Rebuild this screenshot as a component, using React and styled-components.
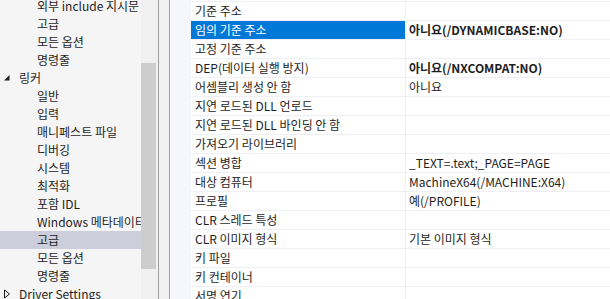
import styled, { createGlobalStyle } from 'styled-components';

const GlobalStyle = createGlobalStyle`
    html, body {
        margin: 0;
        padding: 0;
        overflow: hidden;
    }
    body {
        font-family: "Noto Sans CJK KR", "Noto Sans", sans-serif;
        font-size: 12px;
        color: #1e1e1e;
    }
`

const treeItems = [
    { label: "외부 include 지시문", level: 1 },
    { label: "고급", level: 1 },
    { label: "모든 옵션", level: 1 },
    { label: "명령줄", level: 1 },
    { label: "링커", level: 0, expander: "open" },
    { label: "일반", level: 1 },
    { label: "입력", level: 1 },
    { label: "매니페스트 파일", level: 1 },
    { label: "디버깅", level: 1 },
    { label: "시스템", level: 1 },
    { label: "최적화", level: 1 },
    { label: "포함 IDL", level: 1 },
    { label: "Windows 메타데이터", level: 1 },
    { label: "고급", level: 1, selected: true },
    { label: "모든 옵션", level: 1 },
    { label: "명령줄", level: 1 },
    { label: "Driver Settings", level: 0, expander: "closed" },
];

const properties = [
    { name: "기준 주소", value: "" },
    { name: "임의 기준 주소", value: "아니요(/DYNAMICBASE:NO)", bold: true, selected: true },
    { name: "고정 기준 주소", value: "" },
    { name: "DEP(데이터 실행 방지)", value: "아니요(/NXCOMPAT:NO)", bold: true },
    { name: "어셈블리 생성 안 함", value: "아니요" },
    { name: "지연 로드된 DLL 언로드", value: "" },
    { name: "지연 로드된 DLL 바인딩 안 함", value: "" },
    { name: "가져오기 라이브러리", value: "" },
    { name: "섹션 병합", value: "_TEXT=.text;_PAGE=PAGE" },
    { name: "대상 컴퓨터", value: "MachineX64(/MACHINE:X64)" },
    { name: "프로필", value: "예(/PROFILE)" },
    { name: "CLR 스레드 특성", value: "" },
    { name: "CLR 이미지 형식", value: "기본 이미지 형식" },
    { name: "키 파일", value: "" },
    { name: "키 컨테이너", value: "" },
    { name: "서명 연기", value: "" },
];

function Expander({ type }){
    if(type === "open"){
        return (
            <ExpanderBox>
                <svg width="8" height="8" viewBox="0 0 8 8">
                    <polygon points="6.5,1 6.5,6.5 1,6.5" fill="#1e1e1e" />
                </svg>
            </ExpanderBox>
        );
    }
    return (
        <ExpanderBox>
            <svg width="8" height="10" viewBox="0 0 8 10">
                <polygon points="1.5,1 6.5,5 1.5,9" fill="none" stroke="#1e1e1e" strokeWidth="1" />
            </svg>
        </ExpanderBox>
    );
}

export default function App(){
    return(
    <>
    <GlobalStyle />
    <Screen>
        <Tree>
            {treeItems.map((item, i) =>
            <TreeRow key={i} selected={item.selected} level={item.level}>
                {item.expander && <Expander type={item.expander} />}
                <span>{item.label}</span>
            </TreeRow>)}
        </Tree>
        <ScrollTrack>
            <ScrollThumb />
        </ScrollTrack>
        <Splitter />
        <Grid>
            <Gutter />
            <Rows>
                {properties.map((prop, i) =>
                <PropRow key={i} selected={prop.selected}>
                    <PropName selected={prop.selected}>{prop.name}</PropName>
                    <PropValue bold={prop.bold}>{prop.value}</PropValue>
                </PropRow>)}
            </Rows>
        </Grid>
    </Screen>
    </>
    );
}

const Screen = styled.div`
    width: 610px;
    height: 299px;
    display: flex;
    overflow: hidden;
    background: #ffffff;
`

const Tree = styled.div`
    width: 141px;
    flex-shrink: 0;
    background: #f5f5f5;
    margin-top: -3px;
    overflow: hidden;
`

const TreeRow = styled.div`
    height: 18px;
    display: flex;
    align-items: center;
    padding-left: ${props => props.level === 1 ? "37px" : "3px"};
    background: ${props => props.selected ? "#cccedb" : "transparent"};
    white-space: nowrap;
    line-height: 18px;
    span{
        margin-left: ${props => props.level === 1 ? "0" : "8px"};
    }
`

const ExpanderBox = styled.div`
    width: 8px;
    height: 18px;
    display: flex;
    align-items: center;
    justify-content: center;
`

const ScrollTrack = styled.div`
    width: 17px;
    flex-shrink: 0;
    background: #f0f0f0;
    padding-top: 63px;
`

const ScrollThumb = styled.div`
    width: 15px;
    height: 206px;
    background: #cdcdcd;
`

const Splitter = styled.div`
    width: 10px;
    flex-shrink: 0;
    background: #f0f0f0;
    border-left: 1px solid #a0a0a0;
    border-right: 1px solid #a0a0a0;
`

const Grid = styled.div`
    flex: 1;
    display: flex;
    background: #ffffff;
`

const Gutter = styled.div`
    width: 21px;
    flex-shrink: 0;
    background: #f5f7fc;
`

const Rows = styled.div`
    flex: 1;
    display: flex;
    flex-direction: column;
    margin-top: 1px;
    border-top: 1px solid #eef0f5;
`

const PropRow = styled.div`
    height: 18px;
    flex-shrink: 0;
    display: flex;
    border-bottom: 1px solid #eef0f5;
    background: ${props => props.selected ? "#0078d7" : "#ffffff"};
`

const PropName = styled.div`
    width: 214px;
    flex-shrink: 0;
    padding-left: 4px;
    line-height: 18px;
    white-space: nowrap;
    overflow: hidden;
    color: ${props => props.selected ? "#ffffff" : "#1e1e1e"};
    box-sizing: border-box;
`

const PropValue = styled.div`
    flex: 1;
    background: #ffffff;
    border-left: 1px solid #eef0f5;
    padding-left: 3px;
    line-height: 18px;
    white-space: nowrap;
    font-weight: ${props => props.bold ? 700 : 400};
    color: #1e1e1e;
`
